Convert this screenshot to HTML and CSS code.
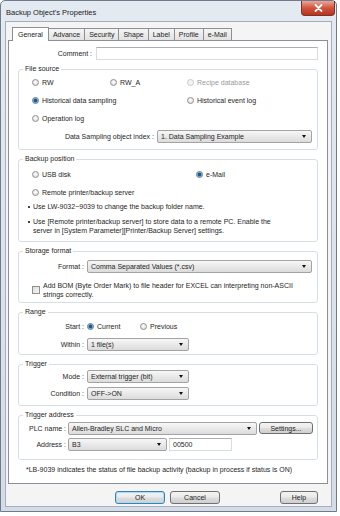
FILE: index.html
```html
<!DOCTYPE html>
<html lang="en">
<head>
    <meta charset="UTF-8">
    <meta name="viewport" content="width=device-width, initial-scale=1.0">
    <title>Backup Object's Properties</title>
    <link rel="stylesheet" href="styles.css">
</head>
<body>
    <div class="window">
        <div class="titlebar">
            <span class="title">Backup Object's Properties</span>
            <span class="close">
                <svg width="9" height="8" viewBox="0 0 9 8"><path d="M1.5 1 L7.5 7 M7.5 1 L1.5 7" stroke="#fff" stroke-width="1.8" stroke-linecap="round"/></svg>
            </span>
        </div>

        <div class="client">
            <div class="tabs">
                <span class="tab active">General</span>
                <span class="tab">Advance</span>
                <span class="tab">Security</span>
                <span class="tab">Shape</span>
                <span class="tab">Label</span>
                <span class="tab">Profile</span>
                <span class="tab">e-Mail</span>
            </div>

            <div class="page">
                <div class="comment-row">
                    <span class="lbl">Comment :</span>
                    <span class="textbox wide"></span>
                </div>

                <fieldset class="group">
                    <legend>File source</legend>
                    <div class="radio-grid source-grid">
                        <span class="opt"><span class="radio"></span>RW</span>
                        <span class="opt"><span class="radio"></span>RW_A</span>
                        <span class="opt disabled"><span class="radio"></span>Recipe database</span>
                        <span class="opt"><span class="radio on"></span>Historical data sampling</span>
                        <span></span>
                        <span class="opt"><span class="radio"></span>Historical event log</span>
                        <span class="opt"><span class="radio"></span>Operation log</span>
                    </div>
                    <div class="index-row">
                        <span>Data Sampling object index :</span>
                        <span class="combo index-combo">1. Data Sampling Example<i class="arrow"></i></span>
                    </div>
                </fieldset>

                <fieldset class="group backup">
                    <legend>Backup position</legend>
                    <div class="radio-grid backup-grid">
                        <span class="opt"><span class="radio"></span>USB disk</span>
                        <span class="opt"><span class="radio on"></span>e-Mail</span>
                        <span class="opt"><span class="radio"></span>Remote printer/backup server</span>
                    </div>
                    <div class="note"><span class="bullet"></span><span>Use LW-9032~9039 to change the backup folder name.</span></div>
                    <div class="note second"><span class="bullet"></span><span>Use [Remote printer/backup server] to store data to a remote PC. Enable the<br>server in [System Parameter][Printer/Backup Server] settings.</span></div>
                </fieldset>

                <fieldset class="group storage">
                    <legend>Storage format</legend>
                    <div class="row">
                        <span class="lbl">Format :</span>
                        <span class="combo wide">Comma Separated Values (*.csv)<i class="arrow"></i></span>
                    </div>
                    <div class="check-row">
                        <span class="checkbox"></span>
                        <span>Add BOM (Byte Order Mark) to file header for EXCEL can interpreting non-ASCII<br>strings correctly.</span>
                    </div>
                </fieldset>

                <fieldset class="group range">
                    <legend>Range</legend>
                    <div class="row">
                        <span class="lbl">Start :</span>
                        <span class="opt current"><span class="radio on"></span>Current</span>
                        <span class="opt"><span class="radio"></span>Previous</span>
                    </div>
                    <div class="row">
                        <span class="lbl">Within :</span>
                        <span class="combo short">1 file(s)<i class="arrow"></i></span>
                    </div>
                </fieldset>

                <fieldset class="group trigger">
                    <legend>Trigger</legend>
                    <div class="row">
                        <span class="lbl">Mode :</span>
                        <span class="combo short">External trigger (bit)<i class="arrow"></i></span>
                    </div>
                    <div class="row">
                        <span class="lbl">Condition :</span>
                        <span class="combo short">OFF-&gt;ON<i class="arrow"></i></span>
                    </div>
                </fieldset>

                <fieldset class="group address">
                    <legend>Trigger address</legend>
                    <div class="row">
                        <span class="lbl">PLC name :</span>
                        <span class="combo plc">Allen-Bradley SLC and Micro<i class="arrow"></i></span>
                        <span class="btn settings">Settings...</span>
                    </div>
                    <div class="row">
                        <span class="lbl">Address :</span>
                        <span class="combo device">B3<i class="arrow"></i></span>
                        <span class="textbox addr">00500</span>
                    </div>
                </fieldset>

                <p class="footnote">*LB-9039 indicates the status of file backup activity (backup in process if status is ON)</p>
            </div>

            <div class="buttons">
                <span class="btn default">OK</span>
                <span class="btn">Cancel</span>
                <span class="btn help">Help</span>
            </div>
        </div>
    </div>
</body>
</html>
```

FILE: styles.css
```css
* {
    margin: 0;
    padding: 0;
    box-sizing: border-box;
}

body {
    background: #fff;
    font-family: "Liberation Sans", Arial, sans-serif;
    font-size: 7px;
    color: #1e1e1e;
}

.window {
    width: 337px;
    height: 512px;
    display: flex;
    flex-direction: column;
    background: linear-gradient(#e4eaf1, #d3dce7);
    border: 1px solid #6f7b8b;
    border-radius: 5px 5px 0 0;
}

.titlebar {
    height: 20px;
    display: flex;
    justify-content: space-between;
    align-items: flex-start;
    padding-left: 5px;
}

.title {
    margin-top: 7px;
    font-size: 7.5px;
    color: #1a1a1a;
}

.close {
    width: 34px;
    height: 15px;
    margin-right: 1px;
    display: flex;
    align-items: center;
    justify-content: center;
    background: linear-gradient(#eaa898, #d0533c 50%, #b8351e);
    border: 1px solid #7a3326;
    border-top: none;
    border-radius: 0 0 4px 4px;
}

.client {
    flex: 1;
    margin: 0 4px 4px 4px;
    padding: 5px 3px 0 2px;
    background: #f4f4f4;
    border: 1px solid #a5aebb;
}

/* tabs */
.tabs {
    display: flex;
    align-items: flex-end;
    height: 13px;
    padding-left: 6px;
}

.tab {
    height: 12px;
    line-height: 11px;
    padding: 0 4px;
    margin-right: -1px;
    background: linear-gradient(#f5f5f5, #e2e2e2);
    border: 1px solid #8c8f98;
    border-bottom: none;
    color: #1e1e1e;
}

.tab.active {
    position: relative;
    z-index: 1;
    height: 14px;
    line-height: 13px;
    margin: 0 -1px -1px -2px;
    padding: 0 5px;
    background: #fff;
}

.page {
    height: 444px;
    padding: 6px 9px 0 9px;
    background: #fff;
    border: 1px solid #8c8f98;
}

.comment-row {
    display: flex;
    align-items: center;
    gap: 4px;
    height: 13px;
    padding-left: 9px;
}

.lbl {
    flex: none;
    width: 65px;
    text-align: right;
}

.textbox {
    height: 13px;
    line-height: 11px;
    padding-left: 3px;
    background: #fff;
    border: 1px solid #d8dde3;
    border-top-color: #abadb3;
}

.wide {
    width: 225px;
}

/* group boxes */
.group {
    width: 300px;
    margin-top: 5px;
    border: 1px solid #d5dfe5;
    border-radius: 3px;
}

.group legend {
    margin-left: 4px;
    padding: 0 2px;
    line-height: 8px;
    font-size: 7px;
}

.radio-grid {
    display: grid;
    grid-auto-rows: 18px;
    align-items: center;
    padding-left: 13px;
}

.source-grid {
    grid-template-columns: 78px 77px auto;
}

.backup-grid {
    grid-template-columns: 164px auto;
    padding-top: 2px;
}

.opt {
    display: flex;
    align-items: center;
    gap: 3px;
    white-space: nowrap;
}

.opt.disabled {
    color: #9a9a9a;
}

.radio {
    flex: none;
    width: 7px;
    height: 7px;
    border-radius: 50%;
    border: 1px solid #8f8f8f;
    background: radial-gradient(circle at 50% 40%, #fff, #d6d6d6);
}

.radio.on {
    border-color: #5b7b97;
    background: radial-gradient(circle, #1d5a92 0 1.6px, #8fb7d8 2.2px, #eef3f8 3px);
}

.disabled .radio {
    border-color: #c9c9c9;
    background: #f3f3f3;
}

.index-row {
    height: 18px;
    display: flex;
    align-items: center;
    justify-content: flex-end;
    gap: 3px;
    padding-right: 5px;
    margin-bottom: 4px;
}

.combo {
    flex: none;
    height: 13px;
    display: flex;
    align-items: center;
    justify-content: space-between;
    padding: 0 5px 0 3px;
    white-space: nowrap;
    background: linear-gradient(#f7f7f7, #e9e9e9 50%, #dcdcdc);
    border: 1px solid #a3a3a3;
    border-radius: 2px;
}

.arrow {
    width: 0;
    height: 0;
    border-left: 2.5px solid transparent;
    border-right: 2.5px solid transparent;
    border-top: 3px solid #111;
}

.index-combo {
    width: 155px;
}

.note {
    display: flex;
    gap: 3px;
    margin-top: 1px;
    padding-left: 9px;
    line-height: 9px;
    white-space: nowrap;
}

.note.second {
    margin-top: 6px;
    margin-bottom: 6px;
}

.bullet {
    flex: none;
    width: 2px;
    height: 2px;
    margin-top: 4px;
    background: #444;
}

.row {
    height: 18px;
    display: flex;
    align-items: center;
    gap: 3px;
}

.storage .row {
    margin-top: 2px;
}

.check-row {
    display: flex;
    align-items: center;
    gap: 3px;
    margin: 6px 0 3px 13px;
    line-height: 9px;
    white-space: nowrap;
}

.checkbox {
    flex: none;
    width: 8px;
    height: 8px;
    border: 1px solid #8e8f8f;
    background: linear-gradient(135deg, #dcdcdc, #f8f8f8);
}

.range .row:first-of-type {
    margin-top: 1px;
}

.range .row:last-child {
    margin-bottom: 1px;
}

.opt.current {
    width: 50px;
}

.short {
    width: 102px;
}

.trigger .row {
    height: 17px;
}

.trigger .row:last-child {
    margin-bottom: 3px;
}

.address .row {
    height: 16px;
    gap: 2px;
}

.address .row:first-of-type {
    margin-top: 1px;
}

.address .row:last-child {
    margin-bottom: 7px;
}

.address .lbl {
    width: 47px;
}

.plc {
    width: 189px;
}

.device {
    width: 99px;
}

.addr {
    width: 63px;
}

.btn {
    height: 13px;
    display: flex;
    align-items: center;
    justify-content: center;
    background: linear-gradient(#f3f3f3, #ebebeb 45%, #dddddd 55%, #cfcfcf);
    border: 1px solid #707070;
    border-radius: 3px;
}

.settings {
    width: 54px;
    height: 12px;
}

.footnote {
    margin-top: 5px;
    padding-left: 8px;
    line-height: 9px;
    white-space: nowrap;
}

.buttons {
    display: flex;
    gap: 5px;
    margin-top: 7px;
    padding: 0 10px 0 107px;
}

.buttons .btn {
    width: 50px;
}

.btn.default {
    border-color: #3c7fb1;
    box-shadow: inset 0 0 0 1px #a7dcf7;
}

.buttons .help {
    width: 38px;
    margin-left: auto;
}
```
